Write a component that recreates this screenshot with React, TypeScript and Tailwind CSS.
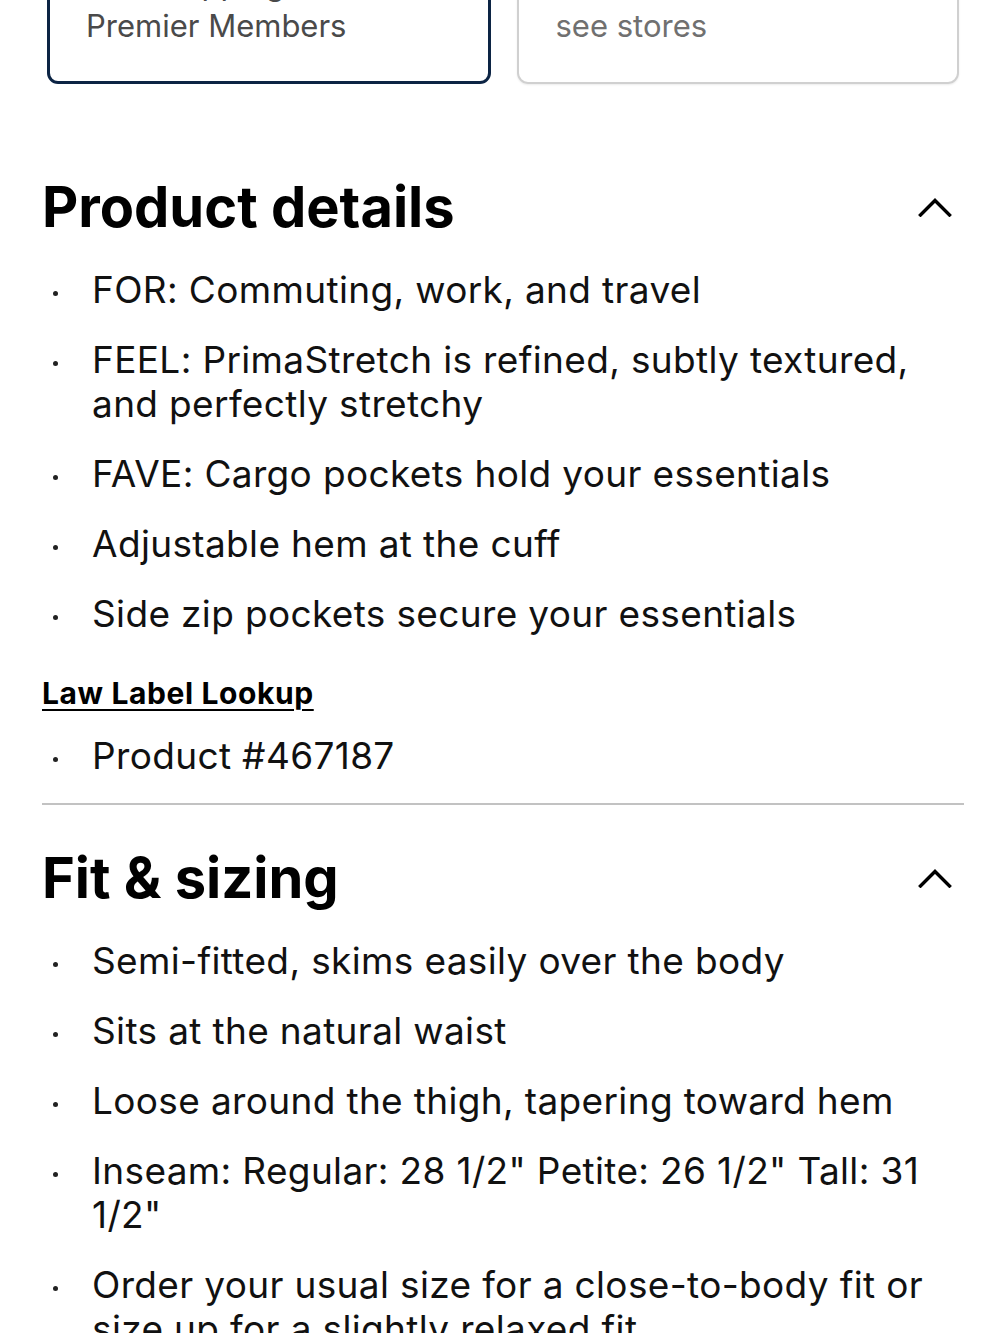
import React from "react";

function Chevron() {
  return (
    <svg width="34" height="20" viewBox="0 0 34 20" fill="none" className="shrink-0">
      <polyline points="2.5,18 17,3.5 31.5,18" stroke="#000" strokeWidth="3.4" strokeLinecap="square" strokeLinejoin="miter" />
    </svg>
  );
}

function Bullet({ children }: { children: React.ReactNode }) {
  return (
    <li className="flex items-start">
      <span className="mt-[23px] ml-[11px] h-[5px] w-[5px] shrink-0 rounded-full bg-[#222]" />
      <span className="ml-[34px] text-[37px] leading-[44px] tracking-[0.35px] text-[#111]">{children}</span>
    </li>
  );
}

function Heading({ children }: { children: React.ReactNode }) {
  return (
    <div className="flex items-center justify-between pr-[12px]">
      <h2 className="text-[56px] leading-[64px] font-bold text-black">{children}</h2>
      <Chevron />
    </div>
  );
}

export default function App() {
  return (
    <div className="min-h-[1333px] w-[1000px] overflow-hidden bg-white font-['Inter',sans-serif]">
      <div className="ml-[42px] w-[922px]">
        {/* fulfilment cards (top cut off) */}
        <div className="-mt-[60px] flex gap-[26px] px-[5px]">
          <div className="flex-1 rounded-[11px] border-[3px] border-[#0c2444] pt-[23px] pb-[37px] pl-[36px]">
            <p className="mb-[6px] text-[31px] leading-[36px] text-[#4a4a4a]">Free shipping for</p>
            <p className="text-[31px] leading-[36px] text-[#4a4a4a]">Premier Members</p>
          </div>
          <div className="flex-1 rounded-[11px] border-2 border-[#d0d0d0] pt-[24px] pb-[38px] pl-[37px] shadow-[0_1px_2px_rgba(0,0,0,0.08)]">
            <p className="mb-[6px] text-[31px] leading-[36px] text-[#707070]">Select a size to</p>
            <p className="text-[31px] leading-[36px] text-[#707070]">see stores</p>
          </div>
        </div>

        {/* Product details */}
        <section className="mt-[91px]">
          <Heading>Product details</Heading>
          <ul className="mt-[29px] flex flex-col gap-[26px]">
            <Bullet>FOR: Commuting, work, and travel</Bullet>
            <Bullet>
              FEEL: PrimaStretch is refined, subtly textured,
              <br />
              and perfectly stretchy
            </Bullet>
            <Bullet>FAVE: Cargo pockets hold your essentials</Bullet>
            <Bullet>Adjustable hem at the cuff</Bullet>
            <Bullet>Side zip pockets secure your essentials</Bullet>
          </ul>
          <a href="#" className="mt-[39px] block w-fit text-[30px] leading-[36px] font-bold tracking-[0.6px] text-black underline decoration-2 underline-offset-[5px]">
            Law Label Lookup
          </a>
          <ul className="mt-[23px] flex flex-col gap-[26px]">
            <Bullet>Product #467187</Bullet>
          </ul>
        </section>

        <div className="mt-[25px] h-[2px] w-full bg-[#c2c2c2]" />

        {/* Fit & sizing */}
        <section className="mt-[41px]">
          <Heading>Fit &amp; sizing</Heading>
          <ul className="mt-[29px] flex flex-col gap-[26px]">
            <Bullet>Semi-fitted, skims easily over the body</Bullet>
            <Bullet>Sits at the natural waist</Bullet>
            <Bullet>Loose around the thigh, tapering toward hem</Bullet>
            <Bullet>
              Inseam: Regular: 28 1/2" Petite: 26 1/2" Tall: 31
              <br />
              1/2"
            </Bullet>
            <Bullet>
              Order your usual size for a close-to-body fit or
              <br />
              size up for a slightly relaxed fit
            </Bullet>
          </ul>
        </section>
      </div>
    </div>
  );
}
